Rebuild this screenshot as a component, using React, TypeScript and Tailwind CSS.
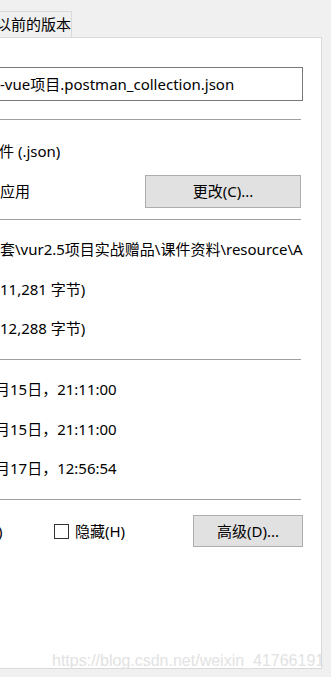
import React from "react";

const font = {
  fontFamily: '"Noto Sans", "Noto Sans CJK SC", sans-serif',
};

function Sep() {
  return <div className="h-px w-[301px] bg-[#a0a0a0]" />;
}

function Row({ children, mt }: { children: React.ReactNode; mt: string }) {
  return <div className={`${mt} flex h-[20px] items-center whitespace-nowrap`}>{children}</div>;
}

export default function App() {
  return (
    <div
      className="relative h-[677px] w-[331px] overflow-hidden bg-[#f0f0f0] text-[15px] text-black"
      style={font}
    >
      {/* Tab strip */}
      <div className="pt-[11px]">
        <div className="flex h-[26px] w-[72px] items-center overflow-hidden border-r border-t border-[#d9d9d9] bg-[#f0f0f0]">
          <span className="ml-[-4px] whitespace-nowrap leading-none">以前的版本</span>
        </div>
      </div>

      {/* Panel */}
      <div className="h-[632px] w-[322px] overflow-hidden border-b border-r border-t border-[#d9d9d9] bg-white">
        <div className="mt-[29px] flex h-[34px] w-[313px] -ml-[10px] items-center border border-[#7a7a7a] pl-[9px] whitespace-nowrap">
          -vue项目.postman_collection.json
        </div>

        <div className="mt-[18px]">
          <Sep />
        </div>

        <Row mt="mt-[21px]">
          <span className="-ml-[1px]">件 (.json)</span>
        </Row>

        <div className="mt-[14px] flex h-[33px] items-center">
          <span className="w-[145px] whitespace-nowrap">应用</span>
          <button className="flex h-[33px] w-[156px] items-center justify-center border border-[#adadad] bg-[#e1e1e1]">
            更改(C)...
          </button>
        </div>

        <div className="mt-[11px]">
          <Sep />
        </div>

        <Row mt="mt-[19px]">
          <span className="w-[303px] overflow-hidden">套\vur2.5项目实战赠品\课件资料\resource\API</span>
        </Row>
        <Row mt="mt-[20px]">
          <span>11,281 字节)</span>
        </Row>
        <Row mt="mt-[19px]">
          <span>12,288 字节)</span>
        </Row>

        <div className="mt-[21px]">
          <Sep />
        </div>

        <Row mt="mt-[19px]">
          <span className="-ml-[5px]">月15日，21:11:00</span>
        </Row>
        <Row mt="mt-[20px]">
          <span className="-ml-[5px]">月15日，21:11:00</span>
        </Row>
        <Row mt="mt-[19px]">
          <span className="-ml-[5px]">月17日，12:56:54</span>
        </Row>

        <div className="mt-[21px]">
          <Sep />
        </div>

        <div className="mt-[15px] flex h-[32px] items-center whitespace-nowrap">
          <span className="w-[54px] -ml-[2px] pl-0">)</span>
          <span className="ml-[2px] h-[15px] w-[15px] border border-[#333333] bg-white" />
          <span className="ml-[6px] w-[118px]">隐藏(H)</span>
          <button className="flex h-[32px] w-[110px] items-center justify-center border border-[#adadad] bg-[#e1e1e1]">
            高级(D)...
          </button>
        </div>
      </div>

      {/* Watermark */}
      <div
        className="absolute left-[52px] top-[649px] whitespace-nowrap text-[16px] text-[#e2e2e2]"
        style={{ fontFamily: '"Liberation Sans", Arial, sans-serif' }}
      >
        https://blog.csdn.net/weixin_41766191
      </div>
    </div>
  );
}
